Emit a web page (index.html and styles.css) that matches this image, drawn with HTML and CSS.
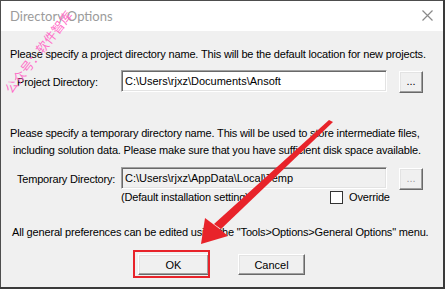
FILE: index.html
```html
<!DOCTYPE html>
<html lang="en">
<head>
  <meta charset="UTF-8" />
  <title>Directory Options</title>
  <link rel="stylesheet" href="styles.css">
</head>
<body>
  <div class="window">
    <div class="titlebar">
      <span class="title">Directory Options</span>
      <svg class="close" width="11" height="11" viewBox="0 0 11 11">
        <path d="M0.5 0.5 L10.5 10.5 M10.5 0.5 L0.5 10.5" stroke="#8a8a8a" stroke-width="1.2" fill="none"/>
      </svg>
    </div>
    <div class="content">
      <p class="note">Please specify a project directory name. This will be the default location for new projects.</p>
      <div class="field-row">
        <span class="field-label">Project Directory:</span>
        <div class="path-box">C:\Users\rjxz\Documents\Ansoft</div>
        <button class="browse">...</button>
      </div>

      <p class="note two-line">Please specify a temporary directory name. This will be used to store intermediate files,<br>&nbsp;including solution data. Please make sure that you have sufficient disk space available.</p>
      <div class="field-row">
        <span class="field-label">Temporary Directory:</span>
        <div class="path-box disabled">C:\Users\rjxz\AppData\Local\Temp</div>
        <button class="browse" disabled>...</button>
      </div>
      <div class="sub-row">
        <span class="hint">(Default installation setting)</span>
        <label class="check"><span class="box"></span>Override</label>
      </div>

      <p class="note footer-note">All general preferences can be edited using the "Tools&gt;Options&gt;General Options" menu.</p>
      <div class="actions">
        <button class="push ok">OK</button>
        <button class="push cancel">Cancel</button>
      </div>
    </div>

    <div class="watermark">公众号：软件智库</div>
    <div class="highlight"></div>
    <svg class="arrow" width="445" height="289" viewBox="0 0 445 289">
      <polygon points="329,120 333,122 221,229 214,224" fill="#e8232a"/>
      <polygon points="201,244 205,218 213,224 221,230 228,236" fill="#e8232a"/>
    </svg>
  </div>
</body>
</html>
```

FILE: styles.css
```css
body {
  margin: 0;
  background: #3a3a3a;
  font-family: "Liberation Sans", Arial, sans-serif;
}
.window {
  position: relative;
  width: 442px;
  height: 286px;
  border-left: 1px solid #4d4d4d;
  border-top: 1px solid #4d4d4d;
  background: #f0f0f0;
  overflow: hidden;
}
.titlebar {
  height: 30px;
  background: #ffffff;
  display: flex;
  align-items: center;
  justify-content: space-between;
  padding: 0 10px 0 9px;
}
.title {
  font-family: Lato, sans-serif;
  font-size: 13px;
  color: #9b9b9b;
  margin-top: -1px;
}
.close {
  margin-top: -1px;
}
.content {
  padding: 0 0 0 9px;
  font-size: 11px;
  color: #000;
}
.note {
  margin: 17px 0 0;
  line-height: 13px;
  white-space: nowrap;
  letter-spacing: -0.17px;
}
.two-line {
  margin-top: 32px;
  line-height: 17px;
}
.footer-note {
  margin-top: 22px;
  padding-left: 2px;
}
.field-row {
  display: grid;
  grid-template-columns: 104px 266px 36px;
  align-items: start;
  margin: 9px 0 0 7px;
}
.two-line + .field-row {
  margin-top: 8px;
}
.field-label {
  align-self: center;
  white-space: nowrap;
  letter-spacing: -0.2px;
}
.path-box {
  height: 22px;
  box-sizing: border-box;
  background: #ffffff;
  border-top: 1px solid #a0a0a0;
  border-left: 1px solid #a0a0a0;
  border-right: 1px solid #ffffff;
  border-bottom: 1px solid #ffffff;
  box-shadow: inset 1px 1px 0 #696969, inset -1px -1px 0 #e3e3e3;
  padding: 3px 0 0 3px;
  line-height: 14px;
  white-space: nowrap;
}
.path-box.disabled {
  background: #f0f0f0;
}
.browse {
  width: 24px;
  height: 22px;
  margin: 1px 0 0 12px;
  padding: 0 0 3px;
  font-family: "Liberation Sans", Arial, sans-serif;
  font-size: 11px;
  color: #000;
  background: #f0f0f0;
  border-top: 1px solid #ffffff;
  border-left: 1px solid #ffffff;
  border-right: 1px solid #696969;
  border-bottom: 1px solid #696969;
  box-shadow: inset -1px -1px 0 #a0a0a0, inset 1px 1px 0 #e3e3e3;
}
.browse:disabled {
  color: #a0a0a0;
}
.sub-row {
  display: flex;
  align-items: center;
  height: 14px;
  margin-left: 111px;
  letter-spacing: -0.17px;
}
.hint {
  width: 209px;
  white-space: nowrap;
}
.check {
  display: flex;
  align-items: center;
  gap: 6px;
}
.box {
  width: 11px;
  height: 11px;
  background: #ffffff;
  border: 1px solid #333333;
}
.actions {
  display: flex;
  gap: 29px;
  margin: 15px 0 0 128px;
}
.push {
  height: 21px;
  font-family: "Liberation Sans", Arial, sans-serif;
  font-size: 11px;
  color: #000;
  background: #f0f0f0;
  border-top: 1px solid #ffffff;
  border-left: 1px solid #ffffff;
  border-right: 1px solid #696969;
  border-bottom: 1px solid #696969;
  box-shadow: inset -1px -1px 0 #a0a0a0, inset 1px 1px 0 #e3e3e3;
  padding: 0;
}
.ok {
  width: 71px;
}
.cancel {
  width: 67px;
}
.watermark {
  position: absolute;
  left: -13px;
  top: 41px;
  font-family: "Noto Sans CJK SC", sans-serif;
  font-size: 12.5px;
  color: #ff6fc8;
  transform: rotate(-52deg);
  white-space: nowrap;
}
.highlight {
  position: absolute;
  left: 132px;
  top: 249px;
  width: 73px;
  height: 24px;
  border: 2px solid #e8232a;
}
.arrow {
  position: absolute;
  left: -1px;
  top: -1px;
  pointer-events: none;
}
```
